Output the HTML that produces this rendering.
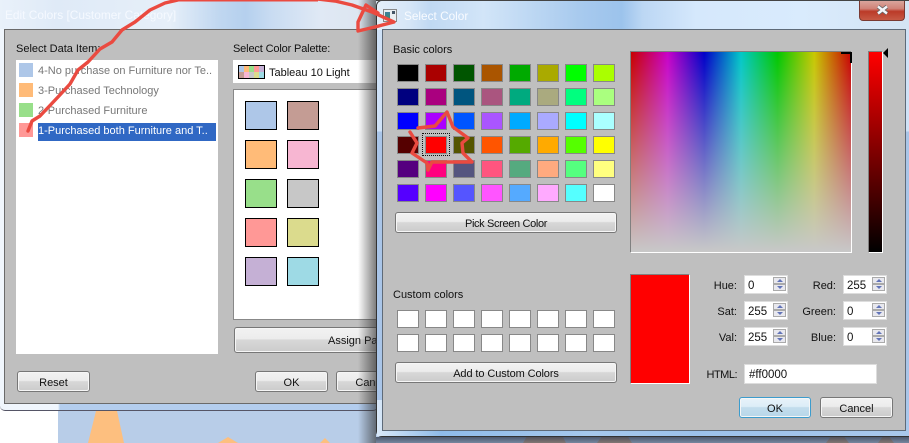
<!DOCTYPE html>
<html><head><meta charset="utf-8"><title>Select Color</title>
<style>
html,body{margin:0;padding:0;width:909px;height:443px;overflow:hidden;background:#fff}
body{position:relative;font:11px "Liberation Sans",sans-serif;color:#111}
.a{position:absolute}
.t{position:absolute;white-space:nowrap;line-height:14px}
.r{text-align:right}
.btn{position:absolute;box-sizing:border-box;border:1px solid #777;border-radius:3px;background:linear-gradient(#f2f2f2 0,#ececec 45%,#d8d8d8 50%,#cbcbcb 100%);box-shadow:inset 0 0 0 1px #f6f6f6;text-align:center;line-height:22px;white-space:nowrap;overflow:hidden}
.sw{position:absolute;box-sizing:border-box;width:32px;height:29px;border:1px solid #000}
.grid{position:absolute;left:397px;display:grid;grid-template-columns:repeat(8,22px);column-gap:6px;row-gap:6px}
.grid div{box-sizing:border-box;height:18px;border:1px solid #888}
.spin{position:absolute;box-sizing:border-box;width:44px;height:19px;background:#fff;border:1px solid #ddd;padding-left:3px;line-height:20px;font-size:11.5px}
.spin i{position:absolute;right:1px;width:13px;height:7px;box-sizing:border-box;border:1px solid #aaa;background:#e8e8ee}
.spin i:before{content:"";position:absolute;left:3px;width:0;height:0;border-left:3px solid transparent;border-right:3px solid transparent}
.spin i.u{top:1px}.spin i.d{top:8px}
.spin i.u:before{top:1px;border-bottom:3px solid #6274b8}
.spin i.d:before{top:1px;border-top:3px solid #6274b8}
</style></head><body>

<!-- desktop background -->
<div class="a" style="left:0;top:405px;width:909px;height:38px;background:#fff"></div>
<div class="a" style="left:58px;top:405px;width:851px;height:38px;background:#b8cde8"></div>
<svg class="a" style="left:0;top:405px" width="909" height="38">
<path d="M88 38 L96 6 L117 6 L124 38Z" fill="#fdbf7f"/>
<path d="M218 38 L228 32 L238 38Z" fill="#fdbf7f"/>
<path d="M320 38 L325 33 L330 38Z" fill="#fdbf7f"/>
</svg>

<!-- left dialog -->
<div class="a" style="left:0;top:0;width:378px;height:411px;box-sizing:border-box;border-bottom:1px solid #556;border-radius:0 0 5px 5px;background:linear-gradient(90deg,#f0f6fd 0,#f0f6fd 58px,#b3cdee 60px,#b3cdee 100%)"></div>
<div class="a" style="left:0;top:0;width:378px;height:29px;background:linear-gradient(90deg,#e9f1fa 0,#dfeaf7 15%,#e6eff9 45%,#c0d7f0 58%,#b5d0ee 65%,#c9dcf2 72%,#e0e9f5 85%,#dbe4ee 100%)"></div>
<div class="t" style="left:5px;top:8px;color:#f5f9ff;font-size:11.9px">Edit Colors [Customer Category]</div>
<div class="a" style="left:4px;top:29px;width:374px;height:375px;box-sizing:border-box;background:#bfbfbf;border:1px solid #6a6a6a;border-right:0"></div>

<div class="t" style="left:16px;top:42px">Select Data Item:</div>
<div class="a" style="left:16px;top:60px;width:202px;height:294px;background:#fff"></div>
<div class="a" style="left:19px;top:63px;width:14px;height:14px;background:#aec7e8"></div>
<div class="a" style="left:19px;top:83px;width:14px;height:14px;background:#ffbb78"></div>
<div class="a" style="left:19px;top:103px;width:14px;height:14px;background:#98df8a"></div>
<div class="a" style="left:19px;top:123px;width:14px;height:14px;background:#ff9896"></div>
<div class="t" style="left:38px;top:64px;color:#777">4-No purchase on Furniture nor Te..</div>
<div class="t" style="left:38px;top:84px;color:#777">3-Purchased Technology</div>
<div class="t" style="left:38px;top:104px;color:#777">2-Purchased Furniture</div>
<div class="a" style="left:38px;top:123px;width:178px;height:18px;background:#3068c4"></div>
<div class="t" style="left:38px;top:124px;color:#fff">1-Purchased both Furniture and T..</div>

<div class="t" style="left:233px;top:42px;letter-spacing:-.15px">Select Color Palette:</div>
<div class="a" style="left:233px;top:60px;width:145px;height:23px;background:#fff"></div>
<div class="a" style="left:238px;top:65px;width:27px;height:14px;box-sizing:border-box;border:1px solid #000;display:grid;grid-template-columns:repeat(5,1fr);grid-template-rows:1fr 1fr">
<span style="background:#aec7e8"></span><span style="background:#ffbb78"></span><span style="background:#98df8a"></span><span style="background:#ff9896"></span><span style="background:#c5b0d5"></span>
<span style="background:#c49c94"></span><span style="background:#f7b6d2"></span><span style="background:#c7c7c7"></span><span style="background:#dbdb8d"></span><span style="background:#9edae5"></span></div>
<div class="t" style="left:269px;top:66px">Tableau 10 Light</div>

<div class="a" style="left:233px;top:89px;width:145px;height:231px;box-sizing:border-box;background:#fff;border:1px solid #888;border-right:0"></div>
<div class="sw" style="left:245px;top:101px;background:#aec7e8"></div>
<div class="sw" style="left:287px;top:101px;background:#c49c94"></div>
<div class="sw" style="left:245px;top:140px;background:#ffbb78"></div>
<div class="sw" style="left:287px;top:140px;background:#f7b6d2"></div>
<div class="sw" style="left:245px;top:179px;background:#98df8a"></div>
<div class="sw" style="left:287px;top:179px;background:#c7c7c7"></div>
<div class="sw" style="left:245px;top:218px;background:#ff9896"></div>
<div class="sw" style="left:287px;top:218px;background:#dbdb8d"></div>
<div class="sw" style="left:245px;top:257px;background:#c5b0d5"></div>
<div class="sw" style="left:287px;top:257px;background:#9edae5"></div>

<div class="btn" style="left:234px;top:327px;width:200px;height:26px;line-height:27px;text-align:left;padding-left:93px">Assign Palette</div>
<div class="btn" style="left:17px;top:371px;width:73px;height:21px">Reset</div>
<div class="btn" style="left:255px;top:371px;width:73px;height:21px">OK</div>
<div class="btn" style="left:336px;top:371px;width:73px;height:21px">Cancel</div>

<!-- background under right window, shadow -->
<div class="a" style="left:358px;top:0;width:18px;height:443px;background:linear-gradient(90deg,rgba(40,40,40,0),rgba(40,40,40,.6))"></div>
<svg class="a" style="left:376px;top:430px" width="533" height="13">
<path d="M147 13 L154 1 L184 1 L190 13Z" fill="#cdb09a"/>
<path d="M221 13 L229 2 L249 2 L256 13Z" fill="#cdb09a"/>
<path d="M450 13 L456 5 L467 5 L473 13Z" fill="#cdb09a"/>
<path d="M502 13 L508 5 L512 5 L518 13Z" fill="#cdb09a"/>
</svg>
<div class="a" style="left:376px;top:437px;width:533px;height:6px;background:linear-gradient(rgba(40,50,70,.75),rgba(40,50,70,.45))"></div>

<!-- right dialog -->
<div class="a" style="left:376px;top:0;width:540px;height:437px;box-sizing:border-box;border:1px solid #333;border-radius:6px;background:linear-gradient(180deg,#cfe2f7 0,#cfe2f7 130px,#a9c5e8 131px,#a9c5e8 100%)"></div>
<div class="a" style="left:377px;top:1px;width:532px;height:29px;border-radius:5px 0 0 0;background:linear-gradient(90deg,#e4eff9 0,#d6e6f7 6%,#c0d9f3 10%,#d2e5f8 20%,#a8caee 38%,#9cc3ec 46%,#bcd7f4 50%,#d5e8fc 60%,#d9ebfd 80%,#d4e4f4 100%)"></div>
<div class="a" style="left:376px;top:0;width:533px;height:1px;background:#444"></div>
<div class="a" style="left:377px;top:400px;width:532px;height:36px;background:linear-gradient(90deg,#d9e8f8,#8fbbe9 12%,#a6c8ec 40%,#9cc1ea 60%,#a9c8ec 100%)"></div>
<div class="a" style="left:382px;top:29px;width:524px;height:402px;box-sizing:border-box;background:#bfbfbf;border:1px solid #5e6a78"></div>

<!-- window icon + title -->
<div class="a" style="left:383px;top:9px;width:14px;height:13px;box-sizing:border-box;border:1px solid #888;background:#e9eef2"></div>
<div class="a" style="left:385px;top:12px;width:5px;height:8px;background:linear-gradient(#3f7f9e,#3c8a6a)"></div>
<div class="a" style="left:392px;top:11px;width:3px;height:3px;background:#456"></div>
<div class="t" style="left:404px;top:9px;color:#f8fbff;font-size:11.8px">Select Color</div>

<!-- close button -->
<div class="a" style="left:859px;top:1px;width:46px;height:20px;box-sizing:border-box;border:1px solid #7a3a32;border-top:0;border-radius:0 0 4px 4px;background:linear-gradient(#d9a59c 0,#d08378 40%,#bb3a28 55%,#c65a45 100%)"></div>
<svg class="a" style="left:875px;top:4px" width="15" height="12"><path d="M3 2.5 L12 9.5 M12 2.5 L3 9.5" stroke="#666" stroke-width="4" fill="none"/><path d="M3 2.5 L12 9.5 M12 2.5 L3 9.5" stroke="#f4f6fa" stroke-width="2.4" fill="none"/></svg>

<div class="t" style="left:393px;top:43px">Basic colors</div>
<div class="grid" style="top:64px">
<div style="background:#000000"></div><div style="background:#aa0000"></div><div style="background:#005500"></div><div style="background:#aa5500"></div><div style="background:#00aa00"></div><div style="background:#aaaa00"></div><div style="background:#00ff00"></div><div style="background:#aaff00"></div>
<div style="background:#00007f"></div><div style="background:#aa007f"></div><div style="background:#00557f"></div><div style="background:#aa557f"></div><div style="background:#00aa7f"></div><div style="background:#aaaa7f"></div><div style="background:#00ff7f"></div><div style="background:#aaff7f"></div>
<div style="background:#0000ff"></div><div style="background:#aa00ff"></div><div style="background:#0055ff"></div><div style="background:#aa55ff"></div><div style="background:#00aaff"></div><div style="background:#aaaaff"></div><div style="background:#00ffff"></div><div style="background:#aaffff"></div>
<div style="background:#550000"></div><div style="background:#ff0000"></div><div style="background:#555500"></div><div style="background:#ff5500"></div><div style="background:#55aa00"></div><div style="background:#ffaa00"></div><div style="background:#55ff00"></div><div style="background:#ffff00"></div>
<div style="background:#55007f"></div><div style="background:#ff007f"></div><div style="background:#55557f"></div><div style="background:#ff557f"></div><div style="background:#55aa7f"></div><div style="background:#ffaa7f"></div><div style="background:#55ff7f"></div><div style="background:#ffff7f"></div>
<div style="background:#5500ff"></div><div style="background:#ff00ff"></div><div style="background:#5555ff"></div><div style="background:#ff55ff"></div><div style="background:#55aaff"></div><div style="background:#ffaaff"></div><div style="background:#55ffff"></div><div style="background:#ffffff"></div>
</div>
<div class="a" style="left:422px;top:133px;width:28px;height:23px;box-sizing:border-box;border:1px dotted #111"></div>

<div class="btn" style="left:395px;top:212px;width:222px;height:21px;letter-spacing:-.35px">Pick Screen Color</div>
<div class="t" style="left:393px;top:288px">Custom colors</div>
<div class="grid" style="top:310px">
<div style="background:#fff"></div><div style="background:#fff"></div><div style="background:#fff"></div><div style="background:#fff"></div><div style="background:#fff"></div><div style="background:#fff"></div><div style="background:#fff"></div><div style="background:#fff"></div>
<div style="background:#fff"></div><div style="background:#fff"></div><div style="background:#fff"></div><div style="background:#fff"></div><div style="background:#fff"></div><div style="background:#fff"></div><div style="background:#fff"></div><div style="background:#fff"></div>
</div>
<div class="btn" style="left:395px;top:362px;width:222px;height:21px;letter-spacing:-.1px">Add to Custom Colors</div>

<!-- colour picker -->
<div class="a" style="left:630px;top:51px;width:222px;height:202px;box-sizing:border-box;border:1px solid;border-color:#808080 #fff #fff #808080;background:linear-gradient(180deg,rgba(200,200,200,0),#c8c8c8),linear-gradient(90deg,#c80000,#c800c8 16.67%,#0000c8 33.33%,#00c8c8 50%,#00c800 66.67%,#c8c800 83.33%,#c80000)"></div>
<div class="a" style="left:841px;top:52px;width:11px;height:2px;background:#000"></div>
<div class="a" style="left:850px;top:52px;width:2px;height:11px;background:#000"></div>
<div class="a" style="left:868px;top:51px;width:15px;height:202px;box-sizing:border-box;border:1px solid;border-color:#808080 #fff #fff #808080;background:linear-gradient(#ff0000,#000)"></div>
<div class="a" style="left:883px;top:48px;width:0;height:0;border-top:5px solid transparent;border-bottom:5px solid transparent;border-right:5px solid #000"></div>

<div class="a" style="left:630px;top:274px;width:60px;height:110px;box-sizing:border-box;border:1px solid;border-color:#808080 #fff #fff #808080;background:#f00"></div>

<div class="t r" style="left:690px;top:279px;width:47px">Hue:</div>
<div class="t r" style="left:690px;top:305px;width:47px">Sat:</div>
<div class="t r" style="left:690px;top:331px;width:47px">Val:</div>
<div class="t r" style="left:789px;top:279px;width:47px">Red:</div>
<div class="t r" style="left:789px;top:305px;width:47px">Green:</div>
<div class="t r" style="left:789px;top:331px;width:47px">Blue:</div>
<div class="t r" style="left:690px;top:368px;width:47px;letter-spacing:-.5px">HTML:</div>

<div class="spin" style="left:744px;top:275px">0<i class="u"></i><i class="d"></i></div>
<div class="spin" style="left:744px;top:301px">255<i class="u"></i><i class="d"></i></div>
<div class="spin" style="left:744px;top:327px">255<i class="u"></i><i class="d"></i></div>
<div class="spin" style="left:843px;top:275px">255<i class="u"></i><i class="d"></i></div>
<div class="spin" style="left:843px;top:301px">0<i class="u"></i><i class="d"></i></div>
<div class="spin" style="left:843px;top:327px">0<i class="u"></i><i class="d"></i></div>
<div class="a" style="left:744px;top:364px;width:133px;height:20px;box-sizing:border-box;background:#fff;border:1px solid #ddd;padding-left:4px;line-height:20px;font-size:11.5px">#ff0000</div>

<div class="btn" style="left:739px;top:397px;width:72px;height:21px;border-color:#3c9ccd;background:linear-gradient(#e8f3fa,#dcedf7 45%,#c2dded 50%,#b8d7e9)">OK</div>
<div class="btn" style="left:820px;top:397px;width:73px;height:21px">Cancel</div>

<!-- hand-drawn annotations -->
<svg class="a" style="left:0;top:0" width="909" height="443">
<g fill="none" stroke="#ea4a40" stroke-width="3.4" stroke-linejoin="round" stroke-linecap="round">
<path d="M28 131 L32 121 L40 116 L58 97 L70 84 L78 70 L88 62 L100 49 L112 42 L122 30 L135 22 L150 10 L165 3 L178 0"/>
<path d="M318 -1 L335 1 L352 5 L372 12 L394 22 L375 27 L358 31 L358 22 L366 5 L378 13"/>
<path d="M418 128 L435 126 L447 112 L453 127 L468 138 L462 143 L463 153 L472 162 L432 162 L428 170 L427 163 L412 153 L417 143 L410 132"/>
</g>
<path d="M178 0 H318" stroke="#ea4a40" stroke-width="3" fill="none"/>
</svg>
</body></html>
